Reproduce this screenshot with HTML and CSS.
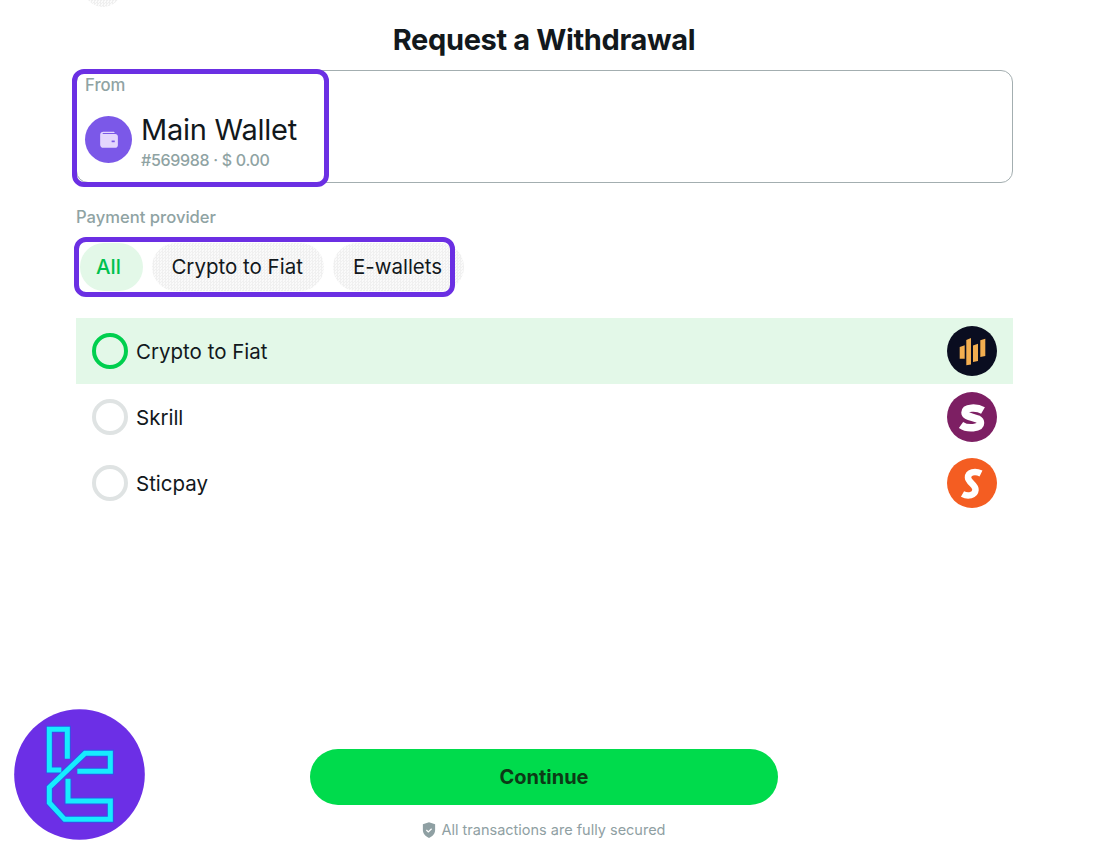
FILE: index.html
```html
<!DOCTYPE html>
<html lang="en">
<head>
<meta charset="utf-8">
<title>Request a Withdrawal</title>
<link rel="stylesheet" href="styles.css">
</head>
<body>
<div class="page">
  <div class="top-fragment"></div>
  <h1 class="title">Request a Withdrawal</h1>
  <section class="from-card">
    <div class="from-label">From</div>
    <div class="wallet">
      <span class="wallet-icon">
        <svg viewBox="0 0 24 24" width="25" height="25"><path fill="#e4d6fd" d="M4 7.500C4 5.600 5.400 4.500 7 4.500h9.500c.9 0 1.500.6 1.500 1.300H6.800c-.6 0-.6 1 0 1H18.500c1.400 0 2.500 1 2.500 2.400v8.300c0 1.400-1.100 2.500-2.500 2.500H7c-1.700 0-3-1.300-3-3z"/><rect x="15" y="13" width="3" height="1.600" fill="#7b58e8"/></svg>
      </span>
      <div class="wallet-text">
        <div class="wallet-name">Main Wallet</div>
        <div class="wallet-meta">#569988 · $ 0.00</div>
      </div>
    </div>
  </section>
  <div class="provider-label">Payment provider</div>
  <div class="chips">
    <span class="chip chip-active">All</span>
    <span class="chip">Crypto to Fiat</span>
    <span class="chip">E-wallets</span>
  </div>
  <ul class="providers">
    <li class="provider provider-active">
      <span class="radio"></span><span class="provider-name">Crypto to Fiat</span>
      <svg class="provider-logo" viewBox="0 0 50 50"><circle cx="25" cy="25" r="25" fill="#0a0d20"/><g fill="#f3ae50"><path d="M12.700 21l5-1.700v13.400h-5z"/><path d="M19.300 14l4.700-2v26.500l-4.700.8z"/><path d="M26 19.500l5-1.800v17.200l-5 1.100z"/><path d="M33.300 14.200l5-1.500v17.200l-5 1.100z"/></g></svg>
    </li>
    <li class="provider">
      <span class="radio"></span><span class="provider-name">Skrill</span>
      <svg class="provider-logo" viewBox="0 0 50 50"><circle cx="25" cy="25" r="25" fill="#7d1f63"/><path d="M36 18.500C30 15 18 15 18 20.500c0 6 15.500 3.500 15.500 10.500 0 5.500-13 6.500-19.500 2" fill="none" stroke="#fff" stroke-width="7.500"/></svg>
    </li>
    <li class="provider">
      <span class="radio"></span><span class="provider-name">Sticpay</span>
      <svg class="provider-logo" viewBox="0 0 50 50"><circle cx="25" cy="25" r="25" fill="#f45d22"/><path d="M34 15.500C28 12.500 21 14 21 19.500c0 5 8 7 7.500 12.500C28 37.500 21 39 15.500 36" fill="none" stroke="#fff" stroke-width="6.500"/></svg>
    </li>
  </ul>
  <div class="actions">
    <button class="continue" type="button">Continue</button>
    <div class="secure">
      <svg viewBox="0 0 16 18" width="14" height="16"><path fill="#8fa0a3" d="M8 0l7 2.500V9c0 4-3 7.500-7 9-4-1.500-7-5-7-9V2.500z"/><path d="M5 9l2.200 2.200L11 7.500" fill="none" stroke="#fff" stroke-width="1.400"/></svg>
      <span>All transactions are fully secured</span>
    </div>
  </div>
  <div class="mark mark-wallet"></div>
  <div class="mark mark-chips"></div>
  <svg class="brand" viewBox="42 27 393 393">
    <circle cx="238.500" cy="223.500" r="196" fill="#6c2fe6"/>
    <g fill="none" stroke-linejoin="miter">
      <g stroke="#2f55e8" stroke-width="21">
        <path d="M202 176V88H148V210H184"/>
        <path d="M232 214H331V160H255L148 262V308L194 358H331V303H204V236"/>
      </g>
      <g stroke="#16ecff" stroke-width="15">
        <path d="M202 176V88H148V210H184"/>
        <path d="M232 214H331V160H255L148 262V308L194 358H331V303H204V236"/>
      </g>
    </g>
  </svg>
</div>
</body>
</html>
```
FILE: styles.css
```css
* { box-sizing: border-box; }
html, body { margin: 0; padding: 0; background: #fff; }
body { font-family: Inter, "Noto Sans", sans-serif; color: #12181c; }
.page {
  position: relative;
  width: 1099px;
  height: 854px;
  overflow: hidden;
  padding: 0 86px 0 76px;
  display: flex;
  flex-direction: column;
}
.top-fragment {
  position: absolute;
  left: 84px;
  top: -30px;
  width: 38px;
  height: 37px;
  border-radius: 50%;
  background: repeating-conic-gradient(#efefef 0 25%, #fbfbfb 0 50%) 0 0 / 3px 3px;
}
.title {
  margin: 21px 0 0;
  font-size: 29px;
  line-height: 38px;
  font-weight: 700;
  text-align: center;
  letter-spacing: -0.35px;
  padding-right: 1px;
}
.from-card {
  margin-top: 11px;
  height: 113px;
  border: 1px solid #a3aeb0;
  border-radius: 12px;
  padding: 4px 8px;
}
.from-label { font-size: 16.7px; line-height: 20px; color: #8fa3a3; font-weight: 500; }
.wallet { display: flex; align-items: center; gap: 9px; margin-top: 16px; }
.wallet-icon {
  width: 47px;
  height: 47px;
  margin-top: -2px;
  border-radius: 50%;
  background: #7b58e8;
  display: flex;
  align-items: center;
  justify-content: center;
}
.wallet-name { font-size: 29px; line-height: 38px; letter-spacing: -0.25px; }
.wallet-meta { font-size: 16px; line-height: 20px; color: #8fa3a3; margin-top: 1px; font-weight: 500; letter-spacing: -0.3px; }
.provider-label { margin-top: 24px; font-size: 16.6px; line-height: 20px; color: #8fa3a3; font-weight: 500; }
.chips { display: flex; gap: 9px; margin-top: 16px; margin-left: 4px; }
.chip {
  height: 48px;
  padding: 0 21.5px 0 19.5px;
  border-radius: 24px;
  background: repeating-conic-gradient(#f0f0f0 0 25%, #fafafa 0 50%) 0 0 / 3px 3px;
  font-size: 20.5px;
  line-height: 48px;
}
.chip-active { background: #e3f8e8; color: #00c14e; font-weight: 500; padding: 0 22px 0 16px; }
.providers { list-style: none; margin: 27px 0 0; padding: 0; }
.provider {
  height: 66px;
  padding: 0 16px;
  display: flex;
  align-items: center;
  gap: 8px;
  font-size: 20.5px;
}
.provider-active { background: #e3f8e8; }
.radio {
  width: 36px;
  height: 36px;
  border-radius: 50%;
  border: 4px solid #dfe3e3;
}
.provider-active .radio { border-color: #00cf4e; }
.provider-name { flex: 1; }
.provider-logo { width: 50px; height: 50px; }
.actions {
  margin-top: auto;
  padding-bottom: 14px;
  padding-right: 1px;
  display: flex;
  flex-direction: column;
  align-items: center;
}
.continue {
  width: 468px;
  height: 56px;
  border: 0;
  border-radius: 28px;
  background: #00db4c;
  color: #0c3a16;
  font: 700 20px Inter, "Noto Sans", sans-serif;
}
.secure {
  margin-top: 15px;
  display: flex;
  align-items: center;
  gap: 5px;
  font-size: 14.5px;
  line-height: 20px;
  color: #8fa0a3;
}
.mark {
  position: absolute;
  border: 5px solid #6b2fe3;
  border-radius: 12px;
}
.mark-wallet { left: 72px; top: 69px; width: 257px; height: 118px; }
.mark-chips { left: 74px; top: 237px; width: 381px; height: 60px; }
.brand { position: absolute; left: 14px; top: 709px; width: 131px; height: 131px; }
```
